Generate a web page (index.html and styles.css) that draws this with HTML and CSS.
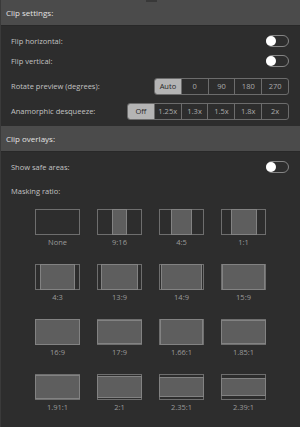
FILE: index.html
```html
<!DOCTYPE html>
<html lang="en">
<head>
    <meta charset="UTF-8">
    <meta name="viewport" content="width=device-width, initial-scale=1.0">
    <title>Clip settings</title>
    <link rel="stylesheet" href="styles.css">
</head>
<body>
    <div class="panel">
        <div class="grip"></div>

        <div class="section-header">Clip settings:</div>
        <div class="section-body">
            <div class="row">
                <span class="label">Flip horizontal:</span>
                <div class="toggle"><div class="knob"></div></div>
            </div>
            <div class="row">
                <span class="label">Flip vertical:</span>
                <div class="toggle"><div class="knob"></div></div>
            </div>
            <div class="row row-seg">
                <span class="label">Rotate preview (degrees):</span>
                <div class="segmented rotate">
                    <div class="seg active">Auto</div>
                    <div class="seg">0</div>
                    <div class="seg">90</div>
                    <div class="seg">180</div>
                    <div class="seg">270</div>
                </div>
            </div>
            <div class="row row-seg">
                <span class="label">Anamorphic desqueeze:</span>
                <div class="segmented desqueeze">
                    <div class="seg active">Off</div>
                    <div class="seg">1.25x</div>
                    <div class="seg">1.3x</div>
                    <div class="seg">1.5x</div>
                    <div class="seg">1.8x</div>
                    <div class="seg">2x</div>
                </div>
            </div>
        </div>

        <div class="section-header">Clip overlays:</div>
        <div class="section-body overlays">
            <div class="row">
                <span class="label">Show safe areas:</span>
                <div class="toggle"><div class="knob"></div></div>
            </div>
            <div class="row">
                <span class="label">Masking ratio:</span>
            </div>

            <div class="ratios">
                <div class="ratio">
                    <div class="thumb"></div>
                    <div class="ratio-name">None</div>
                </div>
                <div class="ratio">
                    <div class="thumb"><div class="mask" style="width: 32.5%; height: 100%;"></div></div>
                    <div class="ratio-name">9:16</div>
                </div>
                <div class="ratio">
                    <div class="thumb"><div class="mask" style="width: 46.2%; height: 100%;"></div></div>
                    <div class="ratio-name">4:5</div>
                </div>
                <div class="ratio">
                    <div class="thumb"><div class="mask" style="width: 57.8%; height: 100%;"></div></div>
                    <div class="ratio-name">1:1</div>
                </div>

                <div class="ratio">
                    <div class="thumb"><div class="mask" style="width: 77%; height: 100%;"></div></div>
                    <div class="ratio-name">4:3</div>
                </div>
                <div class="ratio">
                    <div class="thumb"><div class="mask" style="width: 83.5%; height: 100%;"></div></div>
                    <div class="ratio-name">13:9</div>
                </div>
                <div class="ratio">
                    <div class="thumb"><div class="mask" style="width: 89.9%; height: 100%;"></div></div>
                    <div class="ratio-name">14:9</div>
                </div>
                <div class="ratio">
                    <div class="thumb"><div class="mask" style="width: 96.3%; height: 100%;"></div></div>
                    <div class="ratio-name">15:9</div>
                </div>

                <div class="ratio">
                    <div class="thumb"><div class="mask" style="width: 100%; height: 100%;"></div></div>
                    <div class="ratio-name">16:9</div>
                </div>
                <div class="ratio">
                    <div class="thumb"><div class="mask" style="width: 100%; height: 91.6%;"></div></div>
                    <div class="ratio-name">17:9</div>
                </div>
                <div class="ratio">
                    <div class="thumb"><div class="mask" style="width: 95.9%; height: 100%;"></div></div>
                    <div class="ratio-name">1.66:1</div>
                </div>
                <div class="ratio">
                    <div class="thumb"><div class="mask" style="width: 100%; height: 93.5%;"></div></div>
                    <div class="ratio-name">1.85:1</div>
                </div>

                <div class="ratio">
                    <div class="thumb"><div class="mask" style="width: 100%; height: 90.6%;"></div></div>
                    <div class="ratio-name">1.91:1</div>
                </div>
                <div class="ratio">
                    <div class="thumb"><div class="mask" style="width: 100%; height: 86.5%;"></div></div>
                    <div class="ratio-name">2:1</div>
                </div>
                <div class="ratio">
                    <div class="thumb"><div class="mask" style="width: 100%; height: 73.6%;"></div></div>
                    <div class="ratio-name">2.35:1</div>
                </div>
                <div class="ratio">
                    <div class="thumb"><div class="mask" style="width: 100%; height: 72.4%;"></div></div>
                    <div class="ratio-name">2.39:1</div>
                </div>
            </div>
        </div>
    </div>
</body>
</html>
```

FILE: styles.css
```css
body {
    margin: 0;
    background-color: #2d2d2d;
    font-family: 'Open Sans', 'Noto Sans', sans-serif;
    font-size: 7.5px;
    color: #c2c2c2;
}

.panel {
    position: relative;
    width: 300px;
    height: 427px;
    box-sizing: border-box;
    background-color: #2d2d2d;
    border-left: 1px solid #3a3a3a;
    overflow: hidden;
}

/* little drag handle at the top edge */
.grip {
    position: absolute;
    top: 0;
    left: 145px;
    width: 11px;
    height: 2px;
    background-color: #383838;
}

.section-header {
    height: 25px;
    display: flex;
    align-items: center;
    padding-left: 5px;
    background-color: #4b4b4b;
    border-bottom: 1px solid #282828;
    color: #e2e2e2;
    font-size: 8px;
}

.section-body {
    padding: 5px 11px 5px 10px;
}

.row {
    height: 20px;
    display: flex;
    align-items: center;
    justify-content: space-between;
}

.row-seg {
    margin-top: 5px;
}

.overlays .row + .row {
    margin-top: 4px;
}

.toggle {
    width: 23px;
    height: 12px;
    box-sizing: border-box;
    border: 1px solid #858585;
    border-radius: 6px;
    display: flex;
    align-items: center;
}

.knob {
    width: 10px;
    height: 10px;
    margin-left: -1px;
    border-radius: 50%;
    background-color: #ffffff;
}

.segmented {
    display: flex;
    height: 17px;
    box-sizing: border-box;
    border: 1px solid #6c6c6c;
    border-radius: 3px;
    overflow: hidden;
}

.rotate {
    width: 135px;
}

.desqueeze {
    width: 162px;
}

.seg {
    flex: 1;
    display: flex;
    align-items: center;
    justify-content: center;
    color: #ababab;
}

.seg + .seg {
    border-left: 1px solid #6c6c6c;
}

.seg.active {
    background-color: #b4b4b4;
    color: #262626;
}

/* spans the full panel width so the columns centre on it */
.ratios {
    display: grid;
    grid-template-columns: repeat(4, 62px);
    justify-content: center;
    row-gap: 15px;
    margin: 8px -11px 0 -10px;
}

.ratio {
    display: flex;
    flex-direction: column;
    align-items: center;
}

.thumb {
    width: 45px;
    height: 26px;
    box-shadow: inset 0 0 0 1px #6e6e6e;
    display: flex;
    align-items: center;
    justify-content: center;
}

.mask {
    box-sizing: border-box;
    background-color: #5e5e5e;
    border: 1px solid #828282;
    flex-shrink: 0;
}

.ratio-name {
    height: 14px;
    line-height: 14px;
    color: #9a9a9a;
}
```
